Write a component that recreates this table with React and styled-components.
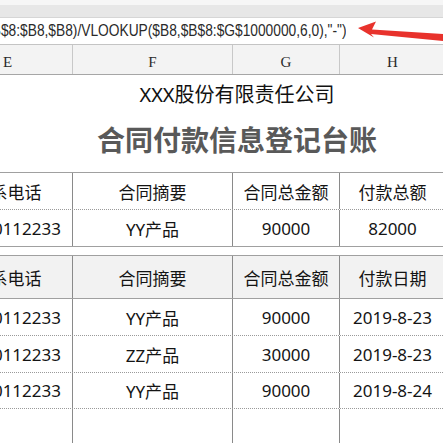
import styled, { createGlobalStyle } from "styled-components";

const GlobalStyle = createGlobalStyle`
  html, body {
    margin: 0;
    padding: 0;
    background: #ffffff;
    overflow: hidden;
  }
  body {
    font-family: "Noto Sans", "Noto Sans CJK SC", sans-serif;
  }
`;

const COLS = "130px 160px 107px 106px 85px";

const table1 = {
  head: ["联系电话", "合同摘要", "合同总金额", "付款总额", ""],
  rows: [["13900112233", "YY产品", "90000", "82000", ""]],
};

const table2 = {
  head: ["联系电话", "合同摘要", "合同总金额", "付款日期", ""],
  rows: [
    ["13900112233", "YY产品", "90000", "2019-8-23", ""],
    ["13900112233", "ZZ产品", "30000", "2019-8-23", ""],
    ["13900112233", "YY产品", "90000", "2019-8-24", ""],
    ["", "", "", "", ""],
  ],
};

function App() {
  return (
    <Page>
      <GlobalStyle />
      <TopStrip />
      <Band />
      <FormulaBar>
        <FormulaText>
          <Formula>
            =IFERROR(COUNTIF($B$8:$B8,$B8)/VLOOKUP($B8,$B$8:$G$1000000,6,0),"-")
          </Formula>
        </FormulaText>
        <Arrow viewBox="0 0 97 26" width="97" height="26">
          <polygon
            points="12,10 30,3.5 26,11.5 97,16 97,23 25,16 28,19.5"
            fill="#e8322c"
          />
        </Arrow>
      </FormulaBar>

      <Sheet>
        <ColumnHeaders>
          {["E", "F", "G", "H", "I"].map((c) => (
            <ColLetter key={c}>{c}</ColLetter>
          ))}
        </ColumnHeaders>

        <Company>XXX股份有限责任公司</Company>
        <MainTitle>合同付款信息登记台账</MainTitle>

        <Table>
          <Row $h={37} $line="dotted">
            {table1.head.map((t, i) => (
              <Cell key={i}>{t}</Cell>
            ))}
          </Row>
          {table1.rows.map((r, i) => (
            <Row key={i} $h={37} $line="solid">
              {r.map((t, j) => (
                <Cell key={j}>{t}</Cell>
              ))}
            </Row>
          ))}
        </Table>

        <Gap />

        <Table>
          <Row $h={43} $line="solid" $head>
            {table2.head.map((t, i) => (
              <Cell key={i}>{t}</Cell>
            ))}
          </Row>
          {table2.rows.map((r, i) => (
            <Row key={i} $h={i === 3 ? 48 : i === 2 ? 36 : 37} $line="dotted">
              {r.map((t, j) => (
                <Cell key={j}>{t}</Cell>
              ))}
            </Row>
          ))}
        </Table>
      </Sheet>
    </Page>
  );
}

//CSS//

const Page = styled.div`
  width: 443px;
  height: 443px;
  overflow: hidden;
  background: #ffffff;
`;

const TopStrip = styled.div`
  height: 5px;
  background: #f6f6f6;
`;

const Band = styled.div`
  height: 12px;
  background: #e7e7e7;
`;

const FormulaBar = styled.div`
  display: flex;
  height: 26px;
  background: #ffffff;
  border-top: 1px solid #d6d6d6;
  border-bottom: 1px solid #c4c4c4;
`;

const FormulaText = styled.div`
  flex: 1;
  display: flex;
  justify-content: flex-end;
  align-items: center;
  overflow: hidden;
  white-space: nowrap;
`;

const Formula = styled.span`
  display: inline-block;
  flex: none;
  font-family: "Liberation Sans", Arial, sans-serif;
  font-size: 16px;
  color: #2a2a2a;
  transform: scaleX(0.86);
  transform-origin: right center;
`;

const Arrow = styled.svg`
  flex: none;
  display: block;
  overflow: visible;
`;

const Sheet = styled.div`
  margin-left: -57px;
  width: 588px;
`;

const ColumnHeaders = styled.div`
  display: grid;
  grid-template-columns: ${COLS};
  height: 29px;
  background: #f3f3f3;
  border-bottom: 1px solid #a6a6a6;
`;

const ColLetter = styled.div`
  display: flex;
  align-items: flex-end;
  justify-content: center;
  padding-bottom: 3px;
  border-right: 1px solid #c8c8c8;
  font-family: "Liberation Serif", "Times New Roman", serif;
  font-size: 15px;
  color: #2a2a2a;
`;

const Company = styled.div`
  height: 40px;
  line-height: 40px;
  text-align: center;
  font-size: 20px;
  color: #111111;
`;

const MainTitle = styled.div`
  height: 57px;
  line-height: 48px;
  text-align: center;
  font-family: "Noto Sans CJK SC", sans-serif;
  font-size: 28px;
  font-weight: 700;
  color: #595959;
`;

const Table = styled.div`
  border-top: 1px solid #a0a0a0;
`;

const Gap = styled.div`
  height: 8px;
`;

const Row = styled.div`
  display: grid;
  grid-template-columns: ${COLS};
  height: ${(p) => p.$h}px;
  box-sizing: border-box;
  background: ${(p) => (p.$head ? "#f2f2f2" : "#ffffff")};
  border-bottom: 1px ${(p) => p.$line} ${(p) => (p.$line === "solid" ? "#a0a0a0" : "#9a9a9a")};
`;

const Cell = styled.div`
  display: flex;
  align-items: center;
  justify-content: center;
  overflow: hidden;
  white-space: nowrap;
  border-right: 1px solid #8a8a8a;
  font-size: 17px;
  color: #141414;
`;

export default App;
